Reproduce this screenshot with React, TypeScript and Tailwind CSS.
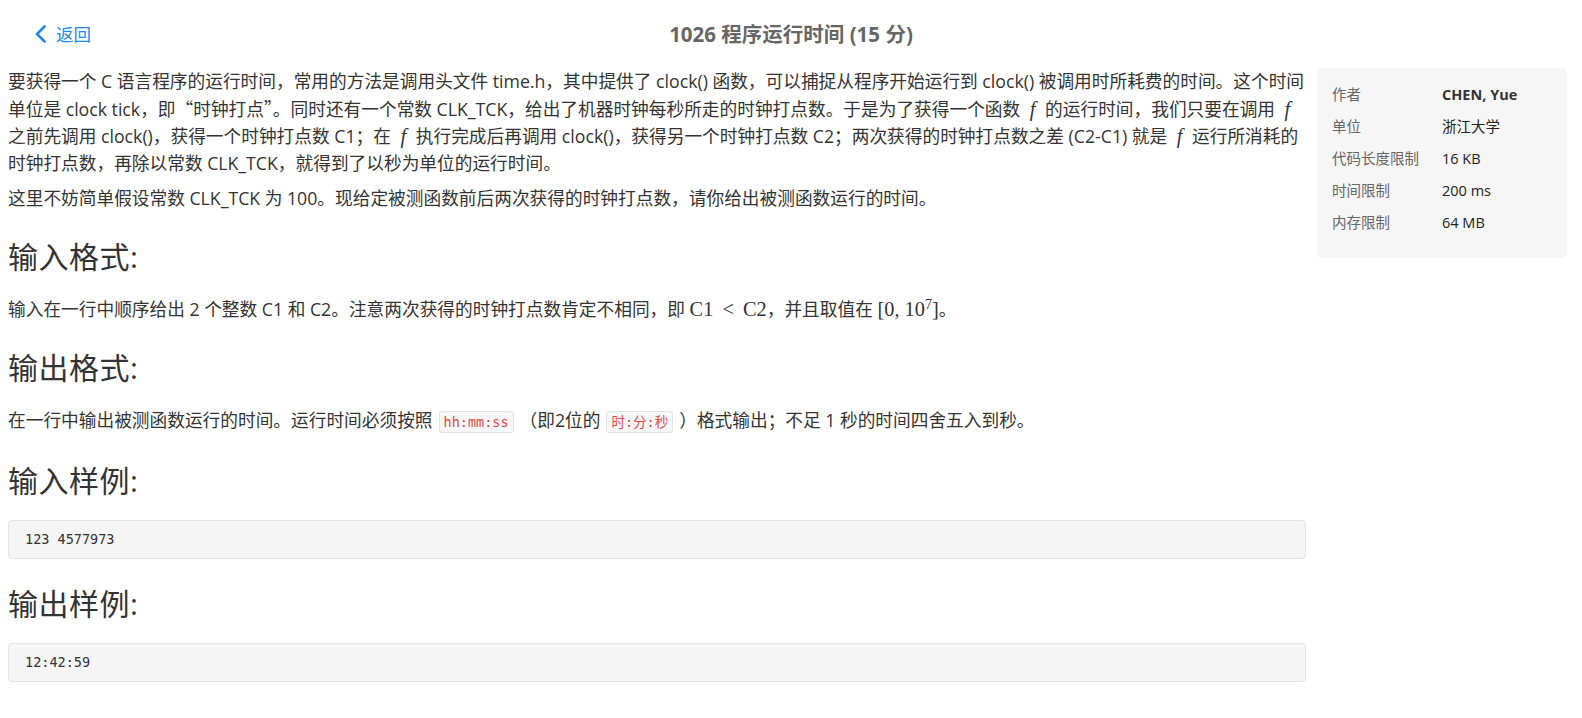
const info = [
  { label: "作者", value: "CHEN, Yue", bold: true },
  { label: "单位", value: "浙江大学" },
  { label: "代码长度限制", value: "16 KB" },
  { label: "时间限制", value: "200 ms" },
  { label: "内存限制", value: "64 MB" },
];

function F() {
  return <span className="mx-[5px] font-['Liberation_Serif',serif] text-[1.15em] leading-none italic">f</span>;
}

function Q({ children }: { children: React.ReactNode }) {
  return <span className="font-['Noto_Sans_CJK_SC',sans-serif]">{children}</span>;
}

function Code({ children }: { children: React.ReactNode }) {
  return (
    <code className="mx-[6px] rounded-[3px] border border-[#e1e1e8] bg-[#f7f7f9] px-[4px] py-[2px] font-['DejaVu_Sans_Mono','Noto_Sans_CJK_SC',monospace] text-[13.5px] text-[#e5483f]">
      {children}
    </code>
  );
}

function Heading({ children }: { children: React.ReactNode }) {
  return (
    <h3 className="mt-[28px] mb-[23px] text-[30px] leading-[33px] font-normal tracking-[0.5px] text-[#333]">{children}</h3>
  );
}

function Sample({ text }: { text: string }) {
  return (
    <pre className="rounded-[4px] border border-[#e3e3e3] bg-[#f5f5f5] px-4 py-[9px] font-['DejaVu_Sans_Mono',monospace] text-[13.5px] leading-[19px] text-[#333]">
      {text}
    </pre>
  );
}

export default function App() {
  return (
    <div className="min-h-[718px] bg-white font-['Open_Sans','Noto_Sans_CJK_SC',sans-serif] text-[#333]">
      {/* top bar */}
      <div className="grid h-[68px] grid-cols-[1fr_auto_1fr] items-center">
        <a href="#" className="flex items-center gap-[10px] pl-[35px] text-[17.5px] text-[#1e88e5]">
          <svg width="11" height="18" viewBox="0 0 11 18" fill="none">
            <polyline points="9.5,1.5 2,9 9.5,16.5" stroke="currentColor" strokeWidth="2.6" strokeLinecap="round" strokeLinejoin="round" />
          </svg>
          返回
        </a>
        <h1 className="text-[20.5px] font-bold text-[#666]">1026 程序运行时间 (15 分)</h1>
        <div />
      </div>

      <div className="flex items-start gap-[11px] pr-[15px] pl-2">
        {/* problem body */}
        <div className="min-w-0 flex-1 text-[17.7px] leading-[27px]">
          <p>
            要获得一个 C 语言程序的运行时间，常用的方法是调用头文件 time.h，其中提供了 clock() 函数，可以捕捉从程序开始运行到 clock()
            被调用时所耗费的时间。这个时间单位是 clock tick，即<Q>“</Q>时钟打点<Q>”</Q>。同时还有一个常数
            CLK_TCK，给出了机器时钟每秒所走的时钟打点数。于是为了获得一个函数 <F /> 的运行时间，我们只要在调用 <F /> 之前先调用
            clock()，获得一个时钟打点数 C1；在 <F /> 执行完成后再调用 clock()，获得另一个时钟打点数 C2；两次获得的时钟打点数之差 (C2-C1) 就是{" "}
            <F /> 运行所消耗的时钟打点数，再除以常数 CLK_TCK，就得到了以秒为单位的运行时间。
          </p>
          <p className="mt-[8px]">
            这里不妨简单假设常数 CLK_TCK 为 100。现给定被测函数前后两次获得的时钟打点数，请你给出被测函数运行的时间。
          </p>

          <Heading>输入格式:</Heading>
          <p>
            输入在一行中顺序给出 2 个整数 C1 和 C2。注意两次获得的时钟打点数肯定不相同，即{" "}
            <span className="font-['Liberation_Serif',serif] text-[1.15em] leading-none">
              C1 <span className="mx-[4px]">&lt;</span> C2
            </span>
            ，并且取值在{" "}
            <span className="font-['Liberation_Serif',serif] text-[1.15em] leading-none">
              [0, 10<sup className="text-[0.7em]">7</sup>]
            </span>
            。
          </p>

          <Heading>输出格式:</Heading>
          <p>
            在一行中输出被测函数运行的时间。运行时间必须按照<Code>hh:mm:ss</Code>（即2位的<Code>时:分:秒</Code>）格式输出；不足 1
            秒的时间四舍五入到秒。
          </p>

          <Heading>输入样例:</Heading>
          <Sample text="123 4577973" />

          <Heading>输出样例:</Heading>
          <Sample text="12:42:59" />
        </div>

        {/* side info */}
        <div className="w-[250px] shrink-0 rounded-[5px] bg-[#f6f6f6] pt-[11px] pr-3 pb-[19px] pl-[15px] text-[14.5px]">
          {info.map((row) => (
            <div key={row.label} className="flex h-8 items-center">
              <span className="w-[110px] shrink-0 text-[#666]">{row.label}</span>
              <span className={row.bold ? "font-bold text-[#333]" : "text-[#222]"}>{row.value}</span>
            </div>
          ))}
        </div>
      </div>
    </div>
  );
}
